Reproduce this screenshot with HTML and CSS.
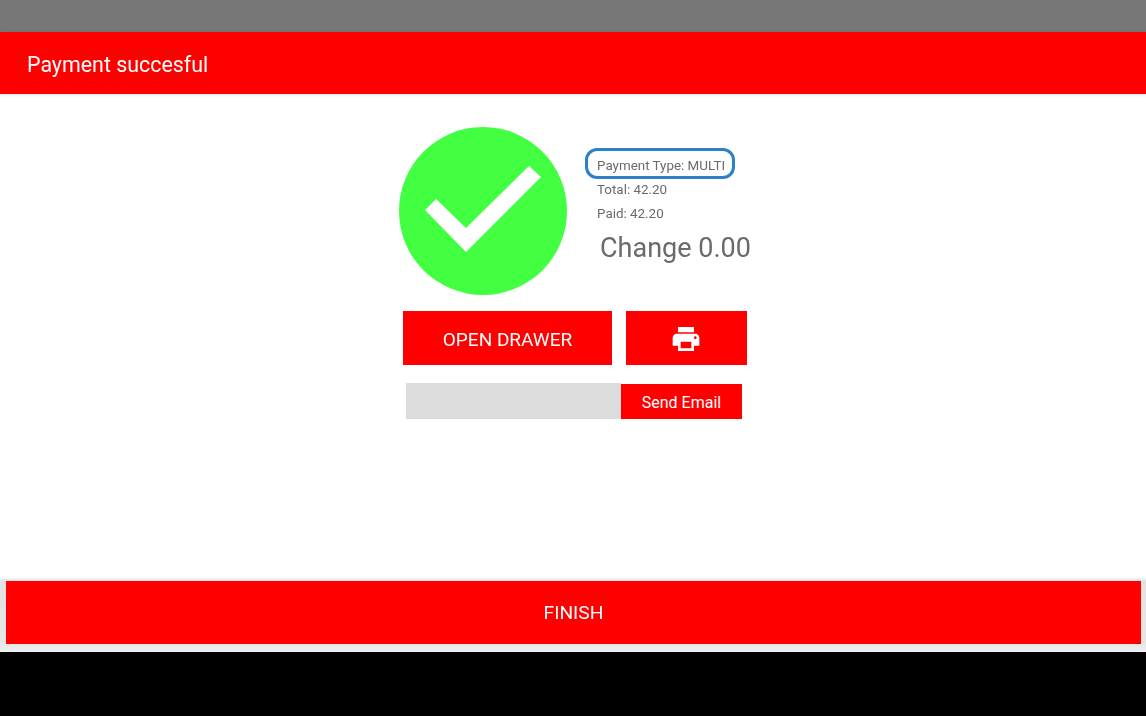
FILE: index.html
```html
<!DOCTYPE html>
<html lang="en">
<head>
<meta charset="utf-8">
<title>Payment succesful</title>
<link rel="stylesheet" href="styles.css">
</head>
<body>
<div class="status"></div>
<header class="bar"><span class="bar-title">Payment succesful</span></header>
<main class="content">
  <section class="summary">
    <div class="circle">
      <svg class="check" viewBox="0 0 168 168" aria-hidden="true"><path d="M26 83 L37 72 L67 101 L130 39 L142 50 L67 125 Z" fill="#fff"/></svg>
    </div>
    <div class="details">
      <div class="type">Payment Type: MULTI</div>
      <div class="line">Total: 42.20</div>
      <div class="line">Paid: 42.20</div>
      <div class="change">Change 0.00</div>
    </div>
  </section>
  <div class="actions">
    <button class="btn drawer">OPEN DRAWER</button>
    <button class="btn print" aria-label="Print">
      <svg class="printer" viewBox="0 0 24 24" aria-hidden="true"><path d="M19 8H5c-1.66 0-3 1.34-3 3v6h4v4h12v-4h4v-6c0-1.66-1.34-3-3-3zm-3 11H8v-5h8v5zm3-7c-.55 0-1-.45-1-1s.45-1 1-1 1 .45 1 1-.45 1-1 1zm-1-9H6v4h12V3z" fill="#fff"/></svg>
    </button>
  </div>
  <div class="email">
    <input class="email-input" type="text" aria-label="Email">
    <button class="btn send">Send Email</button>
  </div>
</main>
<div class="footer"><button class="btn finish">FINISH</button></div>
<div class="navbar"></div>
</body>
</html>
```
FILE: styles.css
```css
* { box-sizing: border-box; }
html, body { margin: 0; height: 716px; overflow: hidden; }
body {
  display: flex;
  flex-direction: column;
  background: #fff;
  font-family: Roboto, "Liberation Sans", sans-serif;
  color: #6a6a6a;
}
.status { height: 32px; background: #777; }
.bar {
  height: 62px;
  background: #f00;
  color: #fff;
  font-size: 21.4px;
  line-height: 66px;
  padding-left: 27px;
  box-shadow: 0 1px 3px rgba(0,0,0,.12);
}
.bar-title { display: inline-block; filter: blur(.45px); }
.content {
  flex: 1;
  display: flex;
  flex-direction: column;
  align-items: flex-start;
  padding: 33px 0 0 399px;
  filter: blur(.45px);
}
.summary { display: flex; height: 168px; }
.circle {
  width: 168px;
  height: 168px;
  border-radius: 50%;
  background: #42ff42;
  flex: none;
}
.check { display: block; width: 168px; height: 168px; }
.details {
  margin-left: 18px;
  padding-top: 21px;
  display: flex;
  flex-direction: column;
  align-items: flex-start;
}
.type {
  width: 150px;
  height: 31px;
  border: 3px solid #2e80c8;
  border-radius: 12px;
  padding-left: 9px;
  font-size: 13.4px;
  line-height: 29px;
  white-space: nowrap;
  overflow: hidden;
}
.line { height: 24px; padding-left: 12px; font-size: 13.4px; line-height: 22px; }
.change {
  padding-left: 15px;
  margin-top: 3px;
  font-size: 27px;
  line-height: 36px;
  white-space: nowrap;
}
.btn {
  border: 0;
  padding: 0;
  background: #f00;
  color: #fff;
  font-family: inherit;
  display: flex;
  align-items: center;
  justify-content: center;
}
.actions { display: flex; gap: 14px; margin: 16px 0 0 4px; }
.drawer { width: 209px; height: 54px; font-size: 19px; padding-top: 3px; }
.print { width: 121px; height: 54px; padding: 2px 2px 0 0; }
.printer { width: 32px; height: 32px; display: block; }
.email { display: flex; align-items: flex-end; margin: 18px 0 0 7px; }
.email-input {
  width: 215px;
  height: 36px;
  border: 0;
  background: #dcdcdc;
  padding: 0;
  display: block;
}
.send { width: 121px; height: 35px; font-size: 16px; padding-top: 2px; }
.footer {
  height: 75px;
  padding: 4px 5px 8px 6px;
  background: linear-gradient(#fff, #e2e2e2 4px, #e6e6e6 66px, #f0f0f0);
}
.finish { width: 100%; height: 63px; font-size: 19.2px; filter: blur(.45px); }
.navbar { height: 64px; background: #000; }
```
